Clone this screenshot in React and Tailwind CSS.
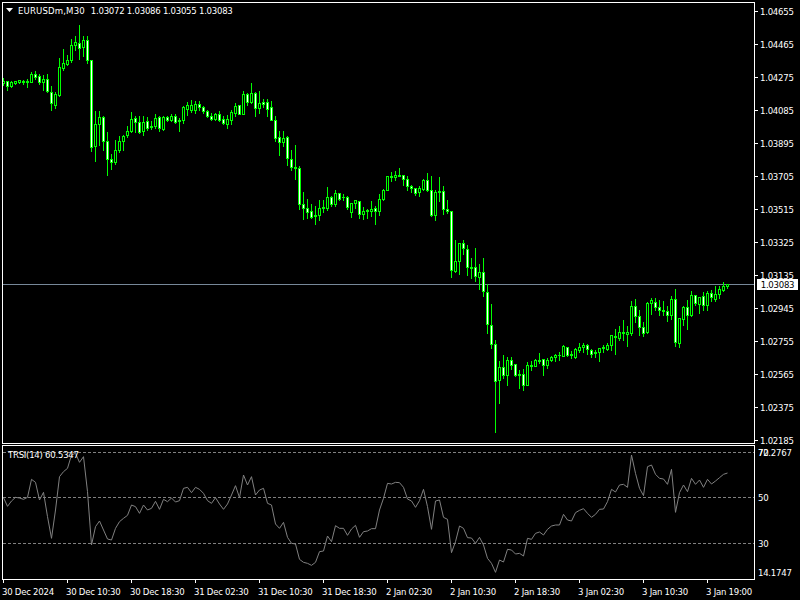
const PRICE_LABELS = ['1.04655', '1.04465', '1.04275', '1.04085', '1.03895', '1.03705', '1.03515', '1.03325', '1.03135', '1.02945', '1.02755', '1.02565', '1.02375', '1.02185']
const TIME_LABELS = ['30 Dec 2024', '30 Dec 10:30', '30 Dec 18:30', '31 Dec 02:30', '31 Dec 10:30', '31 Dec 18:30', '2 Jan 02:30', '2 Jan 10:30', '2 Jan 18:30', '3 Jan 02:30', '3 Jan 10:30', '3 Jan 19:00']

// [high, top, bottom, low, filled], read off the chart at 3x, grouped by vertical offset
const SEGMENTS = [
  [0, [
    [235, 243, 250, 255, 0], [243, 245, 258, 270, 1], [245, 248, 258, 262, 0], [243, 243, 250, 252, 0], [240, 242, 248, 250, 0],
    [240, 245, 247, 252, 0], [237, 245, 248, 262, 0], [218, 222, 246, 248, 0], [213, 222, 231, 238, 1], [222, 229, 248, 252, 1],
    [225, 237, 248, 270, 0], [222, 238, 275, 278, 1], [258, 278, 310, 330, 1], [278, 282, 315, 325, 0], [175, 203, 285, 290, 0],
    [148, 190, 204, 210, 0], [165, 181, 192, 195, 0], [118, 136, 182, 188, 0], [108, 127, 137, 150, 0], [75, 130, 146, 178, 1],
    [108, 122, 143, 170, 0], [108, 121, 182, 190, 1], [181, 181, 442, 455, 1], [335, 373, 440, 485, 0], [333, 352, 374, 435, 0],
    [348, 352, 425, 450, 1], [398, 424, 478, 527, 1], [462, 478, 488, 508, 1], [420, 451, 488, 492, 0], [410, 424, 452, 458, 0],
    [405, 408, 425, 452, 0], [378, 394, 407, 413, 0], [338, 358, 395, 398, 0], [350, 355, 368, 398, 1], [350, 367, 396, 400, 1],
    [350, 366, 394, 405, 0], [352, 363, 386, 390, 1], [363, 378, 383, 388, 1], [343, 355, 380, 385, 0], [348, 352, 386, 395, 1],
    [348, 352, 388, 390, 0], [348, 352, 361, 365, 1], [343, 348, 362, 365, 0], [344, 348, 366, 370, 1], [355, 360, 365, 395, 1],
    [318, 321, 362, 370, 0], [308, 316, 327, 345, 0], [300, 316, 332, 338, 0], [305, 312, 332, 340, 0], [305, 313, 323, 330, 1],
    [320, 322, 335, 340, 1], [330, 334, 350, 352, 1], [340, 349, 357, 360, 1], [340, 343, 357, 360, 0], [335, 342, 360, 365, 1],
    [348, 358, 371, 373, 1], [345, 358, 372, 385, 0], [330, 337, 360, 372, 0], [310, 318, 340, 348, 0], [316, 316, 342, 342, 1],
    [273, 283, 342, 342, 0], [280, 283, 308, 315, 1], [250, 280, 308, 310, 0], [278, 280, 326, 350, 1], [275, 310, 326, 340, 0],
    [298, 307, 313, 322, 1], [298, 307, 327, 350, 1],
  ]],
  [80, [
    [63, 82, 122, 122, 1], [108, 121, 176, 185, 1], [153, 172, 188, 225, 1], [153, 176, 188, 200, 0], [168, 172, 236, 255, 1],
    [210, 238, 263, 272, 1], [195, 262, 266, 297, 1], [258, 265, 374, 387, 1], [336, 373, 386, 417, 1], [357, 385, 398, 415, 1],
    [372, 394, 413, 415, 1], [378, 405, 410, 432, 1], [362, 384, 407, 422, 0], [362, 381, 386, 396, 1], [321, 352, 386, 392, 0],
    [350, 352, 374, 380, 1], [330, 340, 374, 378, 0], [340, 340, 357, 362, 1], [342, 351, 353, 360, 1], [348, 352, 383, 387, 1],
    [370, 370, 398, 411, 0], [360, 361, 371, 384, 0], [363, 364, 404, 414, 1], [382, 394, 404, 417, 0], [388, 391, 395, 415, 1],
    [363, 388, 395, 408, 0], [378, 385, 395, 432, 1], [343, 358, 395, 405, 0], [328, 331, 359, 362, 0], [288, 289, 332, 332, 0],
    [276, 289, 292, 305, 1], [274, 286, 293, 300, 0], [264, 286, 290, 290, 1], [286, 286, 299, 315, 1], [290, 298, 320, 330, 1],
    [316, 319, 326, 338, 1], [324, 325, 339, 345, 1], [318, 325, 338, 348, 0], [298, 300, 327, 332, 0], [279, 301, 332, 335, 1],
    [289, 331, 405, 408, 1], [331, 337, 406, 420, 0], [291, 334, 338, 363, 1], [318, 334, 389, 402, 1], [360, 388, 394, 400, 1],
  ]],
  [200, [
    [35, 35, 212, 231, 1], [120, 184, 213, 218, 0], [130, 130, 185, 222, 0], [120, 130, 146, 163, 1], [135, 148, 203, 225, 1],
    [175, 202, 206, 234, 1], [144, 202, 230, 243, 1], [192, 217, 231, 267, 0], [174, 217, 275, 288, 1], [252, 277, 374, 399, 1],
    [312, 376, 434, 444, 1], [420, 433, 544, 696, 1], [483, 501, 542, 609, 0], [465, 502, 525, 535, 1], [472, 481, 525, 555, 0],
    [472, 481, 495, 507, 1], [492, 492, 527, 530, 1], [510, 522, 527, 564, 1], [507, 523, 555, 570, 1], [488, 496, 555, 557, 0],
    [483, 496, 500, 510, 1], [478, 481, 500, 500, 0], [459, 480, 483, 490, 1], [477, 478, 495, 527, 1], [474, 480, 495, 504, 0],
    [468, 472, 481, 484, 0], [462, 465, 473, 483, 0], [457, 465, 467, 480, 1], [435, 439, 468, 470, 0], [441, 442, 465, 469, 1],
    [454, 462, 467, 474, 1], [445, 447, 472, 474, 0], [429, 442, 450, 456, 0], [431, 435, 443, 456, 0], [432, 436, 449, 462, 1],
    [448, 451, 462, 471, 1], [452, 456, 461, 471, 1], [445, 445, 456, 483, 0],
  ]],
  [260, [
    [255, 263, 266, 278, 1], [250, 256, 268, 272, 0], [225, 226, 257, 270, 0], [208, 229, 233, 282, 1], [198, 216, 236, 240, 0],
    [180, 217, 219, 240, 1], [198, 217, 224, 260, 0], [123, 138, 221, 225, 0], [117, 138, 170, 188, 1], [150, 168, 203, 225, 1],
    [188, 202, 221, 228, 1], [128, 130, 218, 220, 0], [115, 120, 131, 162, 0], [115, 126, 143, 150, 1], [120, 142, 152, 165, 1],
    [125, 150, 155, 165, 1], [140, 153, 167, 183, 1], [108, 118, 165, 177, 0], [87, 118, 247, 258, 1], [175, 175, 250, 262, 0],
    [140, 142, 177, 195, 0], [120, 141, 167, 207, 1], [95, 106, 167, 170, 0], [105, 106, 131, 135, 1], [112, 112, 132, 160, 0],
    [97, 110, 136, 152, 1], [95, 100, 137, 152, 0], [92, 100, 112, 125, 1], [80, 102, 117, 125, 0], [78, 88, 104, 115, 0],
    [67, 78, 90, 95, 0], [72, 74, 79, 85, 0],
  ]],
]

const TRSI = [
  203, 229, 213, 202, 204, 208, 202, 148, 157, 210, 187, 260, 325, 240, 140, 125, 115, 75, 70, 97, 80, 185, 345, 290, 273, 300, 327, 330, 295, 275, 265, 256, 225, 230, 250, 225, 240, 235, 214, 238, 208, 215, 204, 216, 212, 175, 172, 188, 172, 178, 190, 212, 220, 203, 222, 238, 222, 195, 167, 203, 135, 165, 140, 195, 180, 175, 220,
  225, 282, 295, 277, 322, 340, 342, 388, 397, 400, 406, 397, 365, 363, 318, 335, 287, 295, 295, 316, 297, 286, 322, 305, 303, 296, 296, 240, 205, 160, 162, 157, 158, 172, 207, 213, 232, 212, 178, 230, 298, 213, 210, 262, 268, 368, 335, 288, 295, 323, 324, 340, 322, 345, 385, 400, 427, 390, 396, 358, 360, 372, 370, 378, 325,
  328, 310, 306, 315, 298, 288, 285, 285, 253, 270, 273, 248, 241, 236, 250, 262, 253, 238, 237, 215, 178, 186, 165, 163, 172, 75, 130, 175, 197, 110, 105, 133, 145, 147, 163, 118, 247, 188, 165, 185, 145, 163, 150, 172, 148, 162, 153, 143, 133, 129,
]

const candles = SEGMENTS.flatMap(([base, rows]) =>
  rows.map(([high, top, bottom, low, filled]) => ({
    high: Math.floor(base + high / 3),
    top: Math.floor(base + top / 3),
    bottom: Math.floor(base + bottom / 3),
    low: Math.floor(base + low / 3),
    filled,
  }))
)

const trsiPoints = TRSI.map((z, i) => `${3.5 + 4 * i},${430 + z / 3}`).join(' ')

function Candle({ c, i }) {
  const x = 3 + 4 * i
  return (
    <g>
      <rect x={x} y={c.high} width="1" height={c.low - c.high + 1} fill="#00ff00" />
      <rect x={x - 1} y={c.top} width="3" height={c.bottom - c.top + 1} fill="#00ff00" />
      {c.bottom - c.top > 1 && (
        <rect x={x} y={c.top + 1} width="1" height={c.bottom - c.top - 1} fill={c.filled ? '#ffffff' : '#000000'} />
      )}
    </g>
  )
}

export default function App() {
  return (
    <div className="w-[800px] h-[600px] bg-black overflow-hidden text-white text-[9.5px] leading-[11px] tracking-[-0.25px] font-['DejaVu_Sans_Condensed','DejaVu_Sans',sans-serif]">
      {/* Price window */}
      <div className="flex h-[444px] pt-[2px] pl-[2px]">
        <div className="relative w-[753px] h-[442px] border border-white">
          <svg width="751" height="440" viewBox="3 3 751 440" shapeRendering="crispEdges" className="block">
            <line x1="3" y1="284.5" x2="754" y2="284.5" stroke="#778899" />
            {candles.map((c, i) => (
              <Candle key={i} c={c} i={i} />
            ))}
          </svg>
          <div className="absolute left-[3px] top-[2px] flex items-center">
            <svg width="8" height="5" viewBox="0 0 8 5" className="mr-[4px]">
              <polygon points="0,0 7,0 3.5,4" fill="#ffffff" />
            </svg>
            <span className="tracking-[0.15px]">EURUSDm,M30</span>
            <span className="ml-[6px]">1.03072 1.03086 1.03055 1.03083</span>
          </div>
        </div>
        <div className="relative flex-1 mt-[4px] flex flex-col gap-[22px]">
          {PRICE_LABELS.map((p) => (
            <div key={p} className="flex items-center h-[11px] shrink-0">
              <span className="w-[3px] h-px bg-white" />
              <span className="ml-[2px]">{p}</span>
            </div>
          ))}
          <div className="absolute left-[2px] top-[273px] w-[41px] h-[11px] bg-white text-black text-center">1.03083</div>
        </div>
      </div>

      {/* TRSI window */}
      <div className="flex h-[135px] mt-px pl-[2px]">
        <div className="relative w-[753px] h-[135px] border border-white">
          <svg width="751" height="133" viewBox="3 446 751 133" className="block">
            <g stroke="#808080" strokeDasharray="3 2" shapeRendering="crispEdges">
              <line x1="3" y1="452.5" x2="754" y2="452.5" />
              <line x1="3" y1="497.5" x2="754" y2="497.5" />
              <line x1="3" y1="543.5" x2="754" y2="543.5" />
            </g>
            <polyline points={trsiPoints} fill="none" stroke="#808080" />
          </svg>
          <span className="absolute left-[5px] top-[3px]">TRSI(14) 60.5347</span>
        </div>
        <div className="relative flex-1 pl-[3px]">
          <div className="mt-[2px]">72.2767</div>
          <span className="absolute left-[3px] top-[2px]">70</span>
          <div className="mt-[34px]">50</div>
          <div className="mt-[35px]">30</div>
          <div className="mt-[18px]">14.1747</div>
        </div>
      </div>

      {/* Time axis */}
      <div className="flex pl-[3px]">
        {TIME_LABELS.map((t) => (
          <div key={t} className="w-[64px] shrink-0">
            <div className="w-px h-[3px] bg-white" />
            <div className="mt-[3px] -ml-px whitespace-nowrap">{t}</div>
          </div>
        ))}
      </div>
    </div>
  )
}
